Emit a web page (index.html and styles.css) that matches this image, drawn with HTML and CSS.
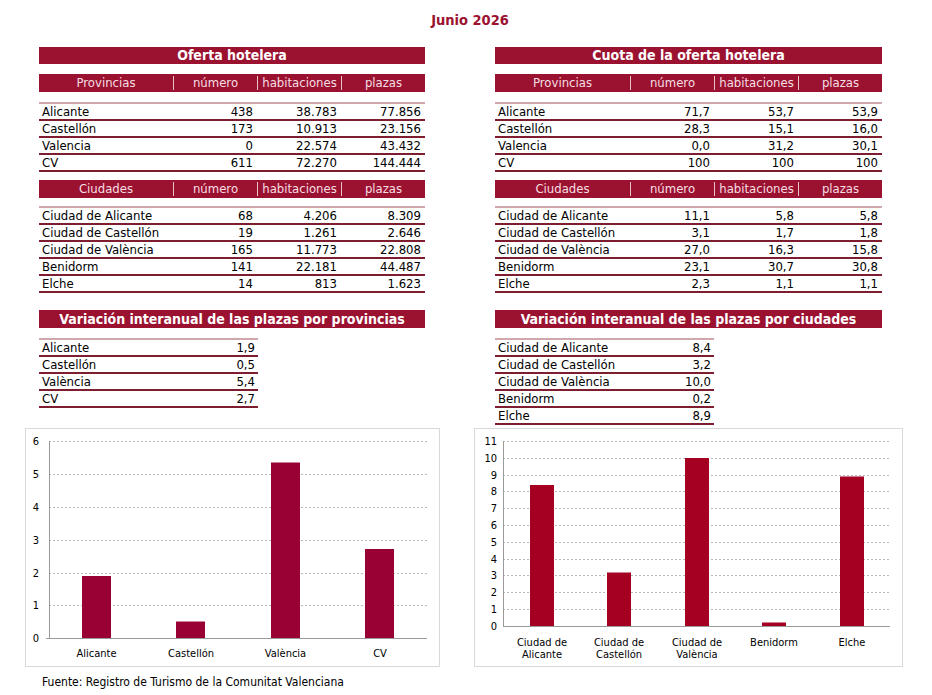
FILE: index.html
```html
<!DOCTYPE html>
<html lang="es">
<head>
<meta charset="utf-8">
<title>Junio 2026</title>
<link rel="stylesheet" href="styles.css">
</head>
<body>
<h1 class="title">Junio 2026</h1>
<div class="tables">
  <section class="col">
    <div class="bar">Oferta hotelera</div>
    <div class="thead"><span>Provincias</span><span>número</span><span>habitaciones</span><span>plazas</span></div>
    <div class="rows">
      <div class="row"><span>Alicante</span><span>438</span><span>38.783</span><span>77.856</span></div>
      <div class="row"><span>Castellón</span><span>173</span><span>10.913</span><span>23.156</span></div>
      <div class="row"><span>Valencia</span><span>0</span><span>22.574</span><span>43.432</span></div>
      <div class="row"><span>CV</span><span>611</span><span>72.270</span><span>144.444</span></div>
    </div>
    <div class="thead sub2"><span>Ciudades</span><span>número</span><span>habitaciones</span><span>plazas</span></div>
    <div class="rows">
      <div class="row"><span>Ciudad de Alicante</span><span>68</span><span>4.206</span><span>8.309</span></div>
      <div class="row"><span>Ciudad de Castellón</span><span>19</span><span>1.261</span><span>2.646</span></div>
      <div class="row"><span>Ciudad de València</span><span>165</span><span>11.773</span><span>22.808</span></div>
      <div class="row"><span>Benidorm</span><span>141</span><span>22.181</span><span>44.487</span></div>
      <div class="row"><span>Elche</span><span>14</span><span>813</span><span>1.623</span></div>
    </div>
    <div class="bar var">Variación interanual de las plazas por provincias</div>
    <div class="rows small">
      <div class="row"><span>Alicante</span><span>1,9</span></div>
      <div class="row"><span>Castellón</span><span>0,5</span></div>
      <div class="row"><span>València</span><span>5,4</span></div>
      <div class="row"><span>CV</span><span>2,7</span></div>
    </div>
  </section>
  <section class="col right">
    <div class="bar">Cuota de la oferta hotelera</div>
    <div class="thead"><span>Provincias</span><span>número</span><span>habitaciones</span><span>plazas</span></div>
    <div class="rows">
      <div class="row"><span>Alicante</span><span>71,7</span><span>53,7</span><span>53,9</span></div>
      <div class="row"><span>Castellón</span><span>28,3</span><span>15,1</span><span>16,0</span></div>
      <div class="row"><span>Valencia</span><span>0,0</span><span>31,2</span><span>30,1</span></div>
      <div class="row"><span>CV</span><span>100</span><span>100</span><span>100</span></div>
    </div>
    <div class="thead sub2"><span>Ciudades</span><span>número</span><span>habitaciones</span><span>plazas</span></div>
    <div class="rows">
      <div class="row"><span>Ciudad de Alicante</span><span>11,1</span><span>5,8</span><span>5,8</span></div>
      <div class="row"><span>Ciudad de Castellón</span><span>3,1</span><span>1,7</span><span>1,8</span></div>
      <div class="row"><span>Ciudad de València</span><span>27,0</span><span>16,3</span><span>15,8</span></div>
      <div class="row"><span>Benidorm</span><span>23,1</span><span>30,7</span><span>30,8</span></div>
      <div class="row"><span>Elche</span><span>2,3</span><span>1,1</span><span>1,1</span></div>
    </div>
    <div class="bar var">Variación interanual de las plazas por ciudades</div>
    <div class="rows small">
      <div class="row"><span>Ciudad de Alicante</span><span>8,4</span></div>
      <div class="row"><span>Ciudad de Castellón</span><span>3,2</span></div>
      <div class="row"><span>Ciudad de València</span><span>10,0</span></div>
      <div class="row"><span>Benidorm</span><span>0,2</span></div>
      <div class="row"><span>Elche</span><span>8,9</span></div>
    </div>
  </section>
</div>

<div class="charts">
  <div class="chart chart-left">
    <svg width="415" height="239" viewBox="0 0 415 239">
      <g class="grid">
        <line x1="24" x2="402" y1="13.5" y2="13.5"/>
        <line x1="24" x2="402" y1="46.5" y2="46.5"/>
        <line x1="24" x2="402" y1="79.5" y2="79.5"/>
        <line x1="24" x2="402" y1="112.5" y2="112.5"/>
        <line x1="24" x2="402" y1="145.5" y2="145.5"/>
        <line x1="24" x2="402" y1="177.5" y2="177.5"/>
      </g>
      <g class="bars-l">
        <rect x="57" y="148" width="29" height="62"/>
        <rect x="151" y="193.5" width="29" height="16.5"/>
        <rect x="246" y="34.5" width="29" height="175.5"/>
        <rect x="340" y="121" width="29" height="89"/>
      </g>
      <g class="axis">
        <line x1="24.5" x2="24.5" y1="13" y2="210"/>
        <line x1="21" x2="402" y1="210.5" y2="210.5"/>
      </g>
      <g class="ylab">
        <text x="14" y="17">6</text>
        <text x="14" y="50">5</text>
        <text x="14" y="83">4</text>
        <text x="14" y="116">3</text>
        <text x="14" y="149">2</text>
        <text x="14" y="181">1</text>
        <text x="14" y="214">0</text>
      </g>
      <g class="xlab">
        <text x="71.5" y="229">Alicante</text>
        <text x="166" y="229">Castellón</text>
        <text x="260.5" y="229">València</text>
        <text x="355" y="229">CV</text>
      </g>
    </svg>
  </div>
  <div class="chart chart-right">
    <svg width="429" height="239" viewBox="0 0 429 239">
      <g class="grid">
        <line x1="29" x2="416" y1="13.5" y2="13.5"/>
        <line x1="29" x2="416" y1="30.5" y2="30.5"/>
        <line x1="29" x2="416" y1="47.5" y2="47.5"/>
        <line x1="29" x2="416" y1="63.5" y2="63.5"/>
        <line x1="29" x2="416" y1="80.5" y2="80.5"/>
        <line x1="29" x2="416" y1="97.5" y2="97.5"/>
        <line x1="29" x2="416" y1="114.5" y2="114.5"/>
        <line x1="29" x2="416" y1="131.5" y2="131.5"/>
        <line x1="29" x2="416" y1="147.5" y2="147.5"/>
        <line x1="29" x2="416" y1="164.5" y2="164.5"/>
        <line x1="29" x2="416" y1="181.5" y2="181.5"/>
      </g>
      <g class="bars-r">
        <rect x="56" y="57" width="24" height="141"/>
        <rect x="133" y="144.5" width="24" height="53.5"/>
        <rect x="211" y="30" width="24" height="168"/>
        <rect x="288" y="194.5" width="24" height="3.5"/>
        <rect x="366" y="48.5" width="24" height="149.5"/>
      </g>
      <g class="axis">
        <line x1="29.5" x2="29.5" y1="13" y2="198"/>
        <line x1="29" x2="416" y1="198.5" y2="198.5"/>
      </g>
      <g class="ylab">
        <text x="23" y="17">11</text>
        <text x="23" y="34">10</text>
        <text x="23" y="51">9</text>
        <text x="23" y="67">8</text>
        <text x="23" y="84">7</text>
        <text x="23" y="101">6</text>
        <text x="23" y="118">5</text>
        <text x="23" y="135">4</text>
        <text x="23" y="151">3</text>
        <text x="23" y="168">2</text>
        <text x="23" y="185">1</text>
        <text x="23" y="202">0</text>
      </g>
      <g class="xlab">
        <text x="68" y="218">Ciudad de</text>
        <text x="68" y="230">Alicante</text>
        <text x="145" y="218">Ciudad de</text>
        <text x="145" y="230">Castellón</text>
        <text x="223" y="218">Ciudad de</text>
        <text x="223" y="230">València</text>
        <text x="300" y="218">Benidorm</text>
        <text x="378" y="218">Elche</text>
      </g>
    </svg>
  </div>
</div>
<p class="source">Fuente: Registro de Turismo de la Comunitat Valenciana</p>
</body>
</html>
```

FILE: styles.css
```css
* { box-sizing: border-box; }
html, body { margin: 0; padding: 0; background: #fff; }
body {
  width: 932px;
  height: 695px;
  overflow: hidden;
  font-family: "DejaVu Sans Condensed", "DejaVu Sans", sans-serif;
  color: #000;
}
.title {
  margin: 0;
  padding-top: 10px;
  padding-left: 8px;
  height: 47px;
  line-height: 20px;
  text-align: center;
  font-size: 14.5px;
  font-weight: bold;
  color: #9b1231;
}
.tables {
  display: flex;
  gap: 70px;
  padding-left: 39px;
  height: 381px;
}
.col { width: 386px; display: flex; flex-direction: column; }
.col.right { width: 387px; }
.bar {
  background: #9b1231;
  color: #fff;
  font-weight: bold;
  font-size: 14px;
  height: 17px;
  line-height: 17px;
  text-align: center;
}
.bar.var { margin-top: 17px; height: 18px; line-height: 18px; }
.thead {
  margin-top: 10px;
  background: #9b1231;
  color: #f6dfe2;
  height: 18px;
  padding: 2px 0;
  display: grid;
  grid-template-columns: 134px 1fr 1fr 1fr;
  font-size: 13px;
  line-height: 14px;
  text-align: center;
}
.right .thead, .right .rows:not(.small) .row { grid-template-columns: 135px 1fr 1fr 1fr; }
.thead.sub2 { margin-top: 8px; }
.thead span + span { border-left: 1px solid #e9c2c8; }
.rows {
  margin-top: 10px;
  border-top: 2px solid #cfa7ad;
}
.sub2 + .rows { margin-top: 8px; }
.row {
  display: grid;
  grid-template-columns: 134px 1fr 1fr 1fr;
  height: 17px;
  line-height: 15px;
  border-bottom: 2px solid #7e1d2f;
  font-size: 13px;
}
.row span { text-align: right; padding-right: 4px; white-space: nowrap; }
.row span:first-child { text-align: left; padding-left: 3px; padding-right: 0; }
.rows.small { width: 219px; }
.rows.small .row { grid-template-columns: 1fr auto; }
.rows.small .row span:last-child { padding-right: 3px; }
.charts {
  display: flex;
  gap: 34px;
  padding-left: 25px;
}
.chart {
  height: 239px;
  border: 1px solid #d9d9d9;
}
.chart svg { display: block; margin: -1px; }
.chart-left { width: 415px; }
.chart-right { width: 429px; }
.grid line { stroke: #b8b8b8; stroke-width: 1; stroke-dasharray: 2 2; }
.axis line { stroke: #9a9a9a; stroke-width: 1; }
.bars-l rect { fill: #990033; }
.bars-r rect { fill: #a50021; }
.ylab text {
  font-family: "DejaVu Sans Condensed", "DejaVu Sans", sans-serif;
  font-size: 11px;
  text-anchor: end;
  fill: #000;
}
.xlab text {
  font-family: "DejaVu Sans Condensed", "DejaVu Sans", sans-serif;
  font-size: 11px;
  text-anchor: middle;
  fill: #000;
}
.source {
  margin: 0;
  padding: 8px 0 0 42px;
  font-size: 12px;
  line-height: 15px;
}
```
